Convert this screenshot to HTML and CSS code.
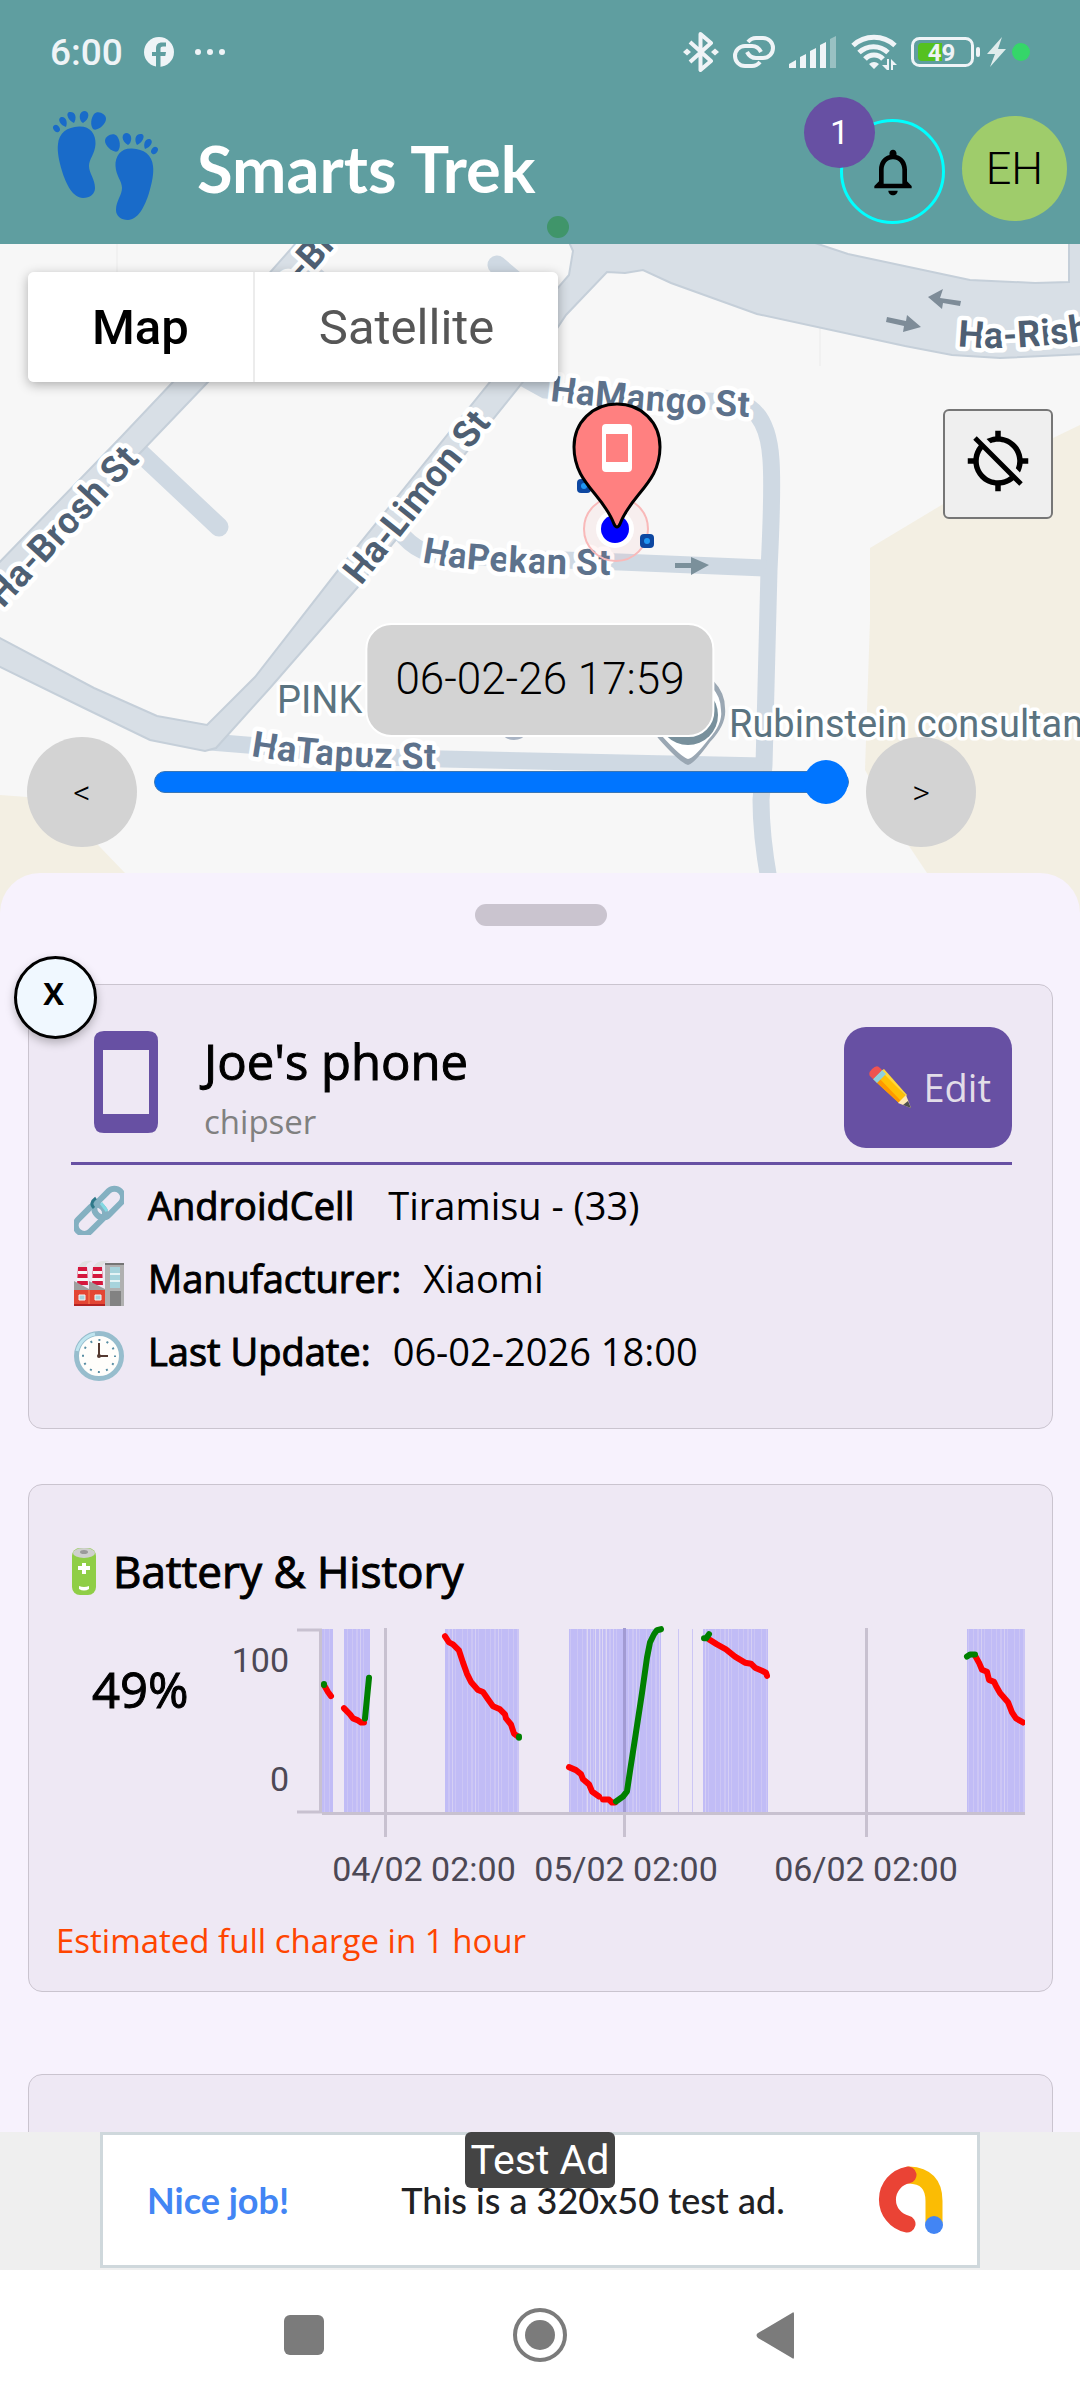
FILE: index.html
```html
<!DOCTYPE html>
<html lang="en">
<head>
    <meta charset="UTF-8">
    <meta name="viewport" content="width=device-width, initial-scale=1.0">
    <title>Smarts Trek</title>
    <link rel="stylesheet" href="styles.css">
</head>
<body>
    <header class="top">
        <div class="status-bar">
            <span class="clock">6:00</span>
            <svg class="fb" width="30" height="30" viewBox="0 0 30 30" aria-hidden="true">
                <circle cx="15" cy="15" r="15" fill="#eff4f7"/>
                <path d="M12 30V19H8v-4h4v-3.500c0-4 2.300-6 6-6h4v4h-3c-1.700 0-2.500.8-2.500 2.300V15H22l-.7 4h-4.800v11z" fill="#5f9ea0"/>
            </svg>
            <svg width="32" height="8" viewBox="0 0 32 8" aria-hidden="true">
                <g fill="#eff4f7"><circle cx="4" cy="4" r="3"/><circle cx="16" cy="4" r="3"/><circle cx="28" cy="4" r="3"/></g>
            </svg>
            <div class="status-icons">
                <svg width="36" height="40" viewBox="0 0 36 40" aria-hidden="true">
                    <path d="M7 10l21 19-10.500 9V2L28 11 7 30" fill="none" stroke="#eff4f7" stroke-width="4" stroke-linejoin="round"/>
                    <path d="M0 20l4-3.500L8 20l-4 3.500zM28 20l4-3.500 4 3.500-4 3.500z" fill="#eff4f7"/>
                </svg>
                <svg class="s-link" width="42" height="32" viewBox="0 0 42 32" aria-hidden="true">
                    <g fill="none" stroke="#eff4f7" stroke-width="4">
                        <path d="M15 6c2-2.500 5-4 8-4h7a9.500 9.500 0 0 1 0 20h-7c-4 0-7-2-9-6"/>
                        <path d="M27 26c-2 2.500-5 4-8 4h-7a9.500 9.500 0 0 1 0-20h7c4 0 7 2 9 6"/>
                    </g>
                </svg>
                <svg class="s-signal" width="48" height="32" viewBox="0 0 48 32" aria-hidden="true">
                    <g fill="#eff4f7"><path d="M0 32v-4l7-4v8zM11 32V21l6-3v14zM21 32V15l6-3v20zM31 32V9l6-3v26z"/><path opacity=".4" d="M41 32V3l6-3v32z"/></g>
                </svg>
                <svg class="s-wifi" width="46" height="36" viewBox="0 0 46 36" aria-hidden="true">
                    <g fill="none" stroke="#eff4f7" stroke-width="5"><path d="M2 11.500a31 31 0 0 1 42 0"/><path d="M8 18.500a21 21 0 0 1 29 0"/><path d="M14 25a12 12 0 0 1 18 0"/></g>
                    <path d="M18 30q5-4 10 0l-5 5zM31 31h5v5zM36 25h2v11h-2zM40 25l6 6h-4v5h-2z" fill="#eff4f7"/>
                </svg>
                <svg class="s-battery" width="70" height="30" viewBox="0 0 70 30" aria-hidden="true">
                    <rect x="1.500" y="1.500" width="60" height="27" rx="7" fill="none" stroke="#eff4f7" stroke-width="3"/>
                    <path d="M7 10q0-4 4-4h20v18H11q-4 0-4-4z" fill="#55c120"/>
                    <rect x="65" y="10" width="4" height="10" rx="2" fill="#eff4f7"/>
                    <text x="30.500" y="24" text-anchor="middle" class="battery-text">49</text>
                </svg>
                <svg class="s-bolt" width="19" height="30" viewBox="0 0 19 30" aria-hidden="true"><path d="M15 0L0 17h8L3 30l16-18h-8z" fill="#dfecec"/></svg>
                <span class="live-dot"></span>
            </div>
        </div>
        <div class="app-bar">
            <svg class="feet" viewBox="52 107 107 116" aria-hidden="true">
                <defs>
                    <g id="foot">
                        <path d="M79 125.500C90 125 96 133 95.500 143C95 153 89 158 89 165C89 172 95 178 95 187C95 193 90 197 83 197C73 197 66 183 62 170C59 160 57 150 58 143C59 132 67 126 79 125.500Z"/>
                        <path d="M93 128C90 124 91 117 94 113C98 109 106 113 106 118C106 123 97 131 93 128Z"/>
                        <path d="M83 122C79 120 78 111 84 110C90 110 90 118 83 122ZM74 122C69 120 65 113 69 111C76 110 77 117 74 122ZM66 126C60 124 57 118 61 116C66 115 68 121 66 126Z"/>
                        <ellipse cx="56.500" cy="127.500" rx="3" ry="4" transform="rotate(-35 56.500 127.500)"/>
                    </g>
                </defs>
                <g fill="#196bc9"><use href="#foot"/><use href="#foot" transform="translate(211 22) scale(-1 1)"/></g>
            </svg>
            <h1 class="brand">Smarts Trek</h1>
            <button class="bell" type="button" aria-label="Notifications">
                <svg width="56" height="56" viewBox="0 0 24 24" aria-hidden="true"><path d="M12 22c1.100 0 2-.9 2-2h-4c0 1.100.9 2 2 2zm6-6v-5c0-3.070-1.630-5.640-4.500-6.320V4c0-.83-.67-1.500-1.500-1.500s-1.500.67-1.500 1.500v.68C7.640 5.360 6 7.920 6 11v5l-2 2v1h16v-1l-2-2zm-2 1H8v-6c0-2.480 1.510-4.500 4-4.500s4 2.020 4 4.500v6z"/></svg>
                <span class="badge">1</span>
            </button>
            <button class="avatar" type="button">EH</button>
        </div>
        <span class="green-dot"></span>
    </header>

    <section class="map">
        <svg class="map-canvas" viewBox="0 244 1080 669" preserveAspectRatio="xMidYMin slice" aria-label="Street map">
            <rect x="0" y="244" width="1080" height="700" fill="#f7f7f7"/>
            <path d="M117 244v30M820 244v122" stroke="#ebebeb"/>
            <path d="M1080 425L1053 438L870 548L870 620L865 770L905 840L927 873L960 913H1080ZM0 795L27 797L60 805L100 847L125 873L150 913H0Z" fill="#f3efe3"/>
            <!-- small streets -->
            <g fill="none" stroke="#cfd9e3" stroke-width="17">
                <path d="M134 447L219 527M497 265L550 310M306 268L330 290" stroke-linecap="round" stroke-width="19"/>
                <path d="M520 376L545 390Q640 397 740 403Q768 412 771 460Q773 490 769 570L764 765L761 800Q761 835 769 880"/>
                <path d="M400 532Q418 556 450 556L620 562L766 568M210 742L260 746Q350 757 443 759L764 766"/>
            </g>
            <!-- main streets -->
            <g fill="#d8dfe6" stroke="#c5cfd9" stroke-width="2">
                <path d="M297 242L173 382L121 437L-10 572V608L143 450L208 382L331 242Z"/>
                <path d="M569 242L573 251L569 275L556 290L490 382L336 573L255 677L207 725L157 716L94 688L-4 636V665L84 708L150 740L205 751L216 748L270 688L357 588L523 382L556 330L566 315L607 272L625 273L643 270L671 283L757 314L905 346L952 355L1000 358L1084 354V240H1069V282L1035 283L970 280L848 254L812 242Z"/>
            </g>
            <g fill="#7e8c98">
                <path d="M887 317l19 4 1-6 14 12-18 5 1-6-18-4zM961 301l-21-3 3-9-15 8 14 12 1-6 17 3z"/>
                <path d="M675 563h16v-6l18 8-18 10v-7h-16z" fill="#7b909b"/>
            </g>
            <defs>
                <path id="risk" d="M958 346Q1010 352 1090 340"/>
                <path id="limon" d="M361 586L515 394"/>
                <path id="brosh" d="M3 609L170 428"/>
                <path id="broshTop" d="M290 297L370 208"/>
                <path id="mango" d="M550 401Q640 412 770 418"/>
                <path id="pekan" d="M422 562Q480 575 640 575"/>
                <path id="tapuz" d="M251 756Q320 769 470 769"/>
            </defs>
            <g class="street">
                <text><textPath href="#risk">Ha-Rish</textPath></text>
                <text><textPath href="#limon">Ha-Limon St</textPath></text>
                <text><textPath href="#brosh">Ha-Brosh St</textPath></text>
                <text><textPath href="#broshTop">a-Br</textPath></text>
            </g>
            <g class="street minor">
                <text><textPath href="#mango">HaMango St</textPath></text>
                <text><textPath href="#pekan">HaPekan St</textPath></text>
                <text><textPath href="#tapuz">HaTapuz St</textPath></text>
            </g>
            <path d="M688 765Q680 763 658 738Q649 724 651 708A37 37 0 0 1 725 708Q727 724 710 742Q694 764 688 765Z" fill="#9aa7b3"/>
            <path d="M688 759Q681 757 662 736Q653 724 655 710A33 33 0 0 1 721 710Q723 724 708 740Q694 758 688 759Z" fill="#fff"/>
            <circle cx="688" cy="715" r="30" fill="#78909c"/>
            <ellipse cx="514" cy="735" rx="10" ry="5" fill="#a9b4c4"/>
            <text class="poi" x="277" y="713">PINK</text>
            <text class="poi" x="729" y="737">Rubinstein consultants</text>
            <!-- track points and position marker -->
            <circle cx="616" cy="529" r="32" fill="#ff8080" fill-opacity=".07" stroke="#f9b9b9" stroke-width="2"/>
            <g fill="#0d47a1"><rect x="577" y="479" width="14" height="14" rx="4"/><rect x="640" y="534" width="14" height="14" rx="4"/><rect x="613" y="505" width="14" height="14" rx="4"/></g>
            <g fill="#2196f3"><circle cx="584" cy="486" r="3"/><circle cx="647" cy="541" r="3"/></g>
            <circle cx="615" cy="529" r="19" fill="#fff"/>
            <circle cx="615" cy="529" r="14" fill="#00f"/>
            <path d="M617 404C641 404 660 422 660 447C660 483 631 494 620 524Q617 530 614 524C603 494 574 483 574 447C574 422 593 404 617 404Z" fill="#ff8080" stroke="#000" stroke-width="3"/>
            <path fill-rule="evenodd" d="M606 424h22q4 0 4 4v40q0 4-4 4h-22q-4 0-4-4v-40q0-4 4-4zM606 434v28h22v-28z" fill="#fff"/>
        </svg>

        <div class="map-type">
            <button class="type-btn active" type="button">Map</button>
            <button class="type-btn" type="button">Satellite</button>
        </div>
        <button class="locate" type="button" aria-label="Locate">
            <svg width="66" height="66" viewBox="0 0 24 24" aria-hidden="true"><path d="M20.940 11c-.46-4.170-3.770-7.480-7.940-7.940V1h-2v2.060c-1.130.12-2.190.46-3.160.97l1.500 1.500C10.160 5.190 11.060 5 12 5c3.870 0 7 3.130 7 7 0 .94-.19 1.840-.52 2.650l1.500 1.500c.5-.96.84-2.020.97-3.150H23v-2h-2.060zM3 4.270l2.040 2.040C3.970 7.620 3.250 9.230 3.060 11H1v2h2.060c.46 4.170 3.770 7.480 7.940 7.940V23h2v-2.060c1.770-.2 3.380-.91 4.690-1.980L19.730 21 21 19.730 4.270 3 3 4.270zm13.270 13.270C15.090 18.450 13.610 19 12 19c-3.870 0-7-3.130-7-7 0-1.610.55-3.090 1.460-4.270l9.810 9.810z"/></svg>
        </button>
        <output class="time-label" for="timeline">06-02-26 17:59</output>
        <div class="timeline">
            <button class="step" type="button" aria-label="Previous">&lt;</button>
            <input class="slider" id="timeline" type="range" min="0" max="100" value="100" aria-label="Time">
            <button class="step" type="button" aria-label="Next">&gt;</button>
        </div>
    </section>

    <main class="sheet">
        <div class="handle"></div>
        <button class="close" type="button" aria-label="Close">X</button>

        <section class="card device">
            <div class="device-head">
                <svg class="phone" width="64" height="102" viewBox="0 0 64 102" aria-hidden="true"><path fill-rule="evenodd" d="M10 0h44q10 0 10 10v82q0 10-10 10H10Q0 102 0 92V10Q0 0 10 0zM9 19v64h46V19z" fill="#6750a3"/></svg>
                <div class="device-name">
                    <h2 class="big">Joe's phone</h2>
                    <p class="owner">chipser</p>
                </div>
                <button class="edit" type="button">
                    <svg width="42" height="42" viewBox="0 0 42 42" aria-hidden="true">
                        <path d="M13 4L37 30l-7 7L4 13z" fill="#ffc107"/>
                        <path d="M7 16l23 21 2-2L9 11z" fill="#ff9800"/>
                        <path d="M12 5l25 25 1-1-23-26z" fill="#ffd83b"/>
                        <path d="M37 29l-8 8 13 5z" fill="#ffe9b5"/>
                        <path d="M39 35l-5 4 8 3z" fill="#4e4e4e"/>
                        <path d="M13 4l4 4-9 9-4-4z" fill="#8fd0dd"/>
                        <path d="M2 11Q-2 8 3 3T11 2l2 2-9 9z" fill="#ef5350"/>
                    </svg>
                    Edit
                </button>
            </div>
            <ul class="facts">
                <li>
                    <svg width="50" height="50" viewBox="0 0 50 50" aria-hidden="true">
                        <g fill="none" stroke-width="6" stroke="#84b0c1">
                            <rect x="18" y="10" width="33" height="17" rx="8" transform="rotate(-45 34 18)"/>
                            <rect x="-1" y="26" width="34" height="17" rx="8" transform="rotate(-45 16 34)"/>
                            <path d="M20 23q-5-5 2-10" stroke="#2f7889" stroke-width="3"/>
                            <path d="M27 18l6 8" stroke="#82d9e3" stroke-width="3"/>
                        </g>
                    </svg>
                    <b>AndroidCell</b><span class="android">Tiramisu - (33)</span>
                </li>
                <li>
                    <svg width="50" height="50" viewBox="0 0 50 50" aria-hidden="true">
                        <path d="M4 10Q7 1 19 3Q11 5 12 10zM19 10Q22 1 36 3Q28 5 28 10z" fill="#e0e0e0"/>
                        <path d="M31 5h19v43H31z" fill="#b0b0b0"/><path d="M31 5h19v2H31z" fill="#757575"/>
                        <path d="M36 9h10v21H36z" fill="#a7d3dc"/><path d="M36 15h10v2H36zM36 22h10v2H36z" fill="#e5f3f5"/><path d="M36 33h11v15H36z" fill="#828282"/>
                        <path d="M4 9h9l1 18H3zM19 9h9l1 18H18z" fill="#d5173d"/>
                        <path d="M4 13h9v3H4zM3 20h11v3H3zM19 13h9v3h-9zM18 20h11v3H18z" fill="#f5f5f5"/>
                        <path d="M0 23l15 8v-8l16 8v3H0z" fill="#9e9e9e"/>
                        <path d="M0 32h31v16H0z" fill="#e34634"/><path d="M15 32v16" stroke="#f68a55"/><path d="M0 46h31v2H0z" fill="#b32222"/>
                        <path d="M5 37h6v5H5zM21 37h6v5h-6z" fill="#a7d3dc" stroke="#f5f5f5"/>
                    </svg>
                    <b>Manufacturer:</b><span>Xiaomi</span>
                </li>
                <li>
                    <svg width="50" height="50" viewBox="0 0 50 50" aria-hidden="true">
                        <circle cx="25" cy="25" r="22.500" fill="#fffefb" stroke="#97bdcd" stroke-width="5"/>
                        <path d="M3 20A22.500 22.500 0 0 1 21 3" fill="none" stroke="#bfe5ef" stroke-width="3"/>
                        <circle cx="25" cy="25" r="16" fill="none" stroke="#578da3" stroke-width="2" stroke-dasharray="2 6.370" stroke-dashoffset="1"/>
                        <path d="M25 12v13h9" fill="none" stroke="#543930" stroke-width="2"/><circle cx="25" cy="25" r="2" fill="#543930"/>
                    </svg>
                    <b>Last Update:</b><span>06-02-2026 18:00</span>
                </li>
            </ul>
        </section>

        <section class="card battery">
            <h2 class="battery-title">
                <svg width="26" height="48" viewBox="0 0 26 48" aria-hidden="true">
                    <rect x="1" y="1" width="24" height="47" rx="8" fill="#8fce46"/>
                    <ellipse cx="13" cy="6" rx="11" ry="5" fill="#cfd0ce"/><ellipse cx="13" cy="5" rx="4" ry="2" fill="#9a9a9a"/>
                    <path d="M11 16h4v3h4v4h-4v4h-4v-4H7v-4h4zM8 39q5 2 10 0v3q-5 3-10 0z" fill="#fff"/>
                </svg>
                Battery &amp; History
            </h2>
            <div class="battery-body">
                <div class="big percent">49%</div>
                <svg class="chart" viewBox="230 1614 795 284" role="img" aria-label="Battery history">
                    <defs>
                        <pattern id="stripes" width="23" height="10" patternUnits="userSpaceOnUse">
                            <path fill="#c1bcf6" d="M0 0h23v10H0z"/>
                            <path fill="#ccc6f5" d="M2 0h1v10H2zM7 0h1v10H7zM11 0h2v10h-2zM18 0h1v10h-1z"/>
                            <path fill="#d5cff4" d="M15 0h1v10h-1z"/>
                        </pattern>
                    </defs>
                    <path fill="url(#stripes)" d="M322 1629h11v183h-11zM344 1629h26v183h-26zM445 1629h74v183h-74zM569 1629h92v183h-92zM678 1629h1v183h-1zM692 1629h1v183h-1zM703 1629h65v183h-65zM967 1629h58v183h-58z"/>
                    <path fill="#ddd7f3" d="M587 1629h1v183h-1zM595 1629h1v183h-1zM599 1629h1v183h-1zM602 1629h1v183h-1zM606 1629h1v183h-1z"/>
                    <g fill="none" stroke="#c8c1d0" stroke-width="3">
                        <path d="M297 1630h23.500v182H297M322 1813.500h703"/>
                        <path d="M385.500 1628v209M866.500 1628v209M624.500 1813v24"/>
                        <path d="M624.500 1628v184" stroke="#a29bd3"/>
                    </g>
                    <g class="axis">
                        <text x="289" y="1672" text-anchor="end">100</text>
                        <text x="289" y="1791" text-anchor="end">0</text>
                        <text x="424" y="1881" text-anchor="middle">04/02 02:00</text>
                        <text x="626" y="1881" text-anchor="middle">05/02 02:00</text>
                        <text x="866" y="1881" text-anchor="middle">06/02 02:00</text>
                    </g>
                    <g class="trend" transform="translate(0 -20.600) scale(1 1.014)">
                        <path class="down" d="M324 1682L328 1689L331 1693M344 1705L350 1711L353 1715L358 1717L361 1719L364 1719M445 1634L449 1640L453 1642L459 1648L463 1660L467 1671L471 1679L478 1687L483 1689L488 1696L493 1703L500 1706L505 1711L506 1715L511 1721L514 1730L518 1733"/>
                        <path class="down" d="M569 1763L576 1766L581 1770L583 1775L589 1780L592 1787L599 1792M603 1795L609 1795L612 1798L615 1798M709 1637L717 1642L726 1647L735 1654L745 1660L751 1661L755 1665L762 1668L766 1670L767 1673"/>
                        <path class="down" d="M975 1653L979 1660L982 1667L987 1669L989 1677L994 1679L996 1683L1000 1690L1008 1699L1012 1709L1016 1715L1023 1719"/>
                        <path class="up" d="M324 1681v1M365 1715L369 1675M519 1733v1M616 1797L623 1792L627 1787L630 1767L635 1735L642 1690L647 1655L650 1640L654 1632L657 1628L661 1627M704 1636L706 1636L709 1632M967 1654L970 1652L975 1652"/>
                    </g>
                </svg>
            </div>
            <p class="estimate">Estimated full charge in 1 hour</p>
        </section>

        <section class="card next"></section>
    </main>

    <aside class="ad">
        <a class="ad-box" href="#">
            <span class="nice">Nice job!</span>
            <span class="ad-text">This is a 320x50 test ad.</span>
            <svg class="ad-logo" width="68" height="68" viewBox="0 0 68 68" aria-hidden="true">
                <g fill="none" stroke-width="17" stroke-linecap="round">
                    <path d="M34 9Q59 10 59 35V56" stroke="#fbbc04"/>
                    <path d="M33 9A25 25 0 0 0 32 58" stroke="#ea4335"/>
                </g>
                <circle cx="59" cy="59" r="9" fill="#4285f4"/>
            </svg>
        </a>
        <span class="ad-tag">Test Ad</span>
    </aside>

    <nav class="nav-bar">
        <button type="button" aria-label="Recent apps"><svg width="56" height="56" viewBox="0 0 56 56" aria-hidden="true"><rect x="8" y="8" width="40" height="40" rx="6" fill="#7b7b7b"/></svg></button>
        <button type="button" aria-label="Home"><svg width="56" height="56" viewBox="0 0 56 56" aria-hidden="true"><circle cx="28" cy="28" r="25" fill="none" stroke="#7b7b7b" stroke-width="4"/><circle cx="28" cy="28" r="15" fill="#7b7b7b"/></svg></button>
        <button type="button" aria-label="Back"><svg width="56" height="56" viewBox="0 0 56 56" aria-hidden="true"><path d="M44 6q2-2 2 1v43q0 3-2 1L10 31q-3-3 0-5z" fill="#7b7b7b"/></svg></button>
    </nav>
</body>
</html>
```
FILE: styles.css
```css
*{
    box-sizing: border-box;
}
body{
    margin: 0;
    height: 100vh;
    display: flex;
    flex-direction: column;
    background-color: #ffffff;
    color: #000000;
    font-family: "Open Sans", sans-serif;
    overflow: hidden;
}
h1, h2, p, ul{
    margin: 0;
    padding: 0;
    font-weight: 400;
}
button{
    font-family: inherit;
    color: inherit;
    border: none;
    padding: 0;
    cursor: pointer;
}
svg{
    display: block;
    flex: none;
}

/* header */
.top{
    position: relative;
    background-color: #5f9ea0;
    font-family: Roboto, sans-serif;
}
.status-bar{
    display: flex;
    align-items: center;
    height: 104px;
    padding: 0 50px;
}
.clock{
    font-size: 37px;
    font-weight: 500;
    color: #eff4f7;
}
.fb{
    margin: 0 20px 0 21px;
}
.status-icons{
    display: flex;
    align-items: center;
    margin-left: auto;
}
.s-link, .s-signal, .s-wifi, .s-battery{
    margin-left: 14px;
}
.s-bolt, .live-dot{
    margin-left: 6px;
}
.battery-text{
    font-size: 24px;
    font-weight: 700;
    fill: #eff4f7;
}
.live-dot{
    width: 18px;
    height: 18px;
    border-radius: 50%;
    background-color: #35d669;
}
.app-bar{
    display: flex;
    align-items: center;
    height: 140px;
    padding: 0 13px 12px 52px;
}
.feet{
    width: 107px;
    height: 116px;
    margin-bottom: 5px;
}
.brand{
    margin-left: 38px;
    font-family: Lato, sans-serif;
    font-size: 65px;
    font-weight: 700;
    color: #ffffff;
}
.bell{
    position: relative;
    display: flex;
    align-items: center;
    justify-content: center;
    width: 105px;
    height: 105px;
    margin: 7px 17px 0 auto;
    border: 3px solid #00ffff;
    border-radius: 50%;
    background: none;
}
.badge{
    position: absolute;
    left: -39px;
    top: -25px;
    width: 71px;
    height: 71px;
    border-radius: 50%;
    background-color: #6750a3;
    color: #ffffff;
    font-size: 34px;
    line-height: 71px;
}
.avatar{
    width: 105px;
    height: 105px;
    border-radius: 50%;
    background-color: #9fcc6b;
    font-size: 45px;
    font-weight: 300;
}
.green-dot{
    position: absolute;
    left: 547px;
    bottom: 6px;
    width: 22px;
    height: 22px;
    border-radius: 50%;
    background-color: #40956a;
}

/* map */
.map{
    position: relative;
    flex: none;
    height: 669px;
    font-family: Roboto, sans-serif;
}
.map-canvas{
    width: 100%;
    height: 100%;
}
.street{
    font-size: 37px;
    font-weight: 700;
    fill: #4e5f73;
    stroke: #ffffff;
    stroke-width: 9px;
    stroke-linejoin: round;
    paint-order: stroke;
}
.minor{
    font-size: 36px;
    fill: #5d728c;
}
.poi{
    font-size: 38px;
    fill: #5a7380;
    stroke: #ffffff;
    stroke-width: 7px;
    stroke-linejoin: round;
    paint-order: stroke;
}
.map-type{
    position: absolute;
    left: 28px;
    top: 28px;
    display: flex;
    height: 110px;
    border-radius: 6px;
    box-shadow: 0 3px 12px rgba(0, 0, 0, 0.3);
}
.type-btn{
    padding: 0 64px;
    background-color: #ffffff;
    color: #565656;
    font-size: 49px;
    border-radius: 0 6px 6px 0;
}
.active{
    color: #000000;
    font-weight: 500;
    border-right: 2px solid #ececec;
    border-radius: 6px 0 0 6px;
}
.locate{
    position: absolute;
    right: 27px;
    top: 165px;
    display: flex;
    align-items: center;
    justify-content: center;
    width: 110px;
    height: 110px;
    padding-bottom: 6px;
    border: 2px solid #767676;
    border-radius: 6px;
    background-color: #efefef;
}
.time-label{
    position: absolute;
    left: 50%;
    top: 379px;
    transform: translateX(-50%);
    padding: 0 28px 2px;
    border: 2px solid #ffffff;
    border-radius: 26px;
    background-color: #d3d3d3;
    font-size: 44px;
    font-weight: 300;
    line-height: 108px;
    white-space: nowrap;
}
.timeline{
    position: absolute;
    left: 27px;
    right: 104px;
    top: 493px;
    display: flex;
    align-items: center;
    gap: 17px;
}
.step{
    flex: none;
    width: 110px;
    height: 110px;
    border-radius: 50%;
    background-color: #d3d3d3;
    font-family: Roboto, sans-serif;
    font-size: 34px;
    font-weight: 300;
}
.slider{
    appearance: none;
    flex: 1;
    min-width: 0;
    height: 44px;
    margin: 0 0 20px;
    background: none;
}
.slider::-webkit-slider-runnable-track{
    height: 22px;
    border: 1px solid #3a76b5;
    border-radius: 11px;
    background-color: #0075ff;
}
.slider::-webkit-slider-thumb{
    appearance: none;
    width: 44px;
    height: 44px;
    margin-top: -12px;
    border-radius: 50%;
    background-color: #0075ff;
}

/* bottom sheet */
.sheet{
    position: relative;
    flex: 1;
    min-height: 0;
    overflow: hidden;
    margin-top: -40px;
    padding: 31px 27px 0 28px;
    border-radius: 40px 40px 0 0;
    background-color: #f7f2fd;
}
.handle{
    width: 132px;
    height: 22px;
    margin: 0 auto 58px;
    border-radius: 11px;
    background-color: #cac4cf;
}
.close{
    position: absolute;
    left: 14px;
    top: 83px;
    width: 83px;
    height: 83px;
    padding: 0 4px 10px 0;
    border: 3px solid #000000;
    border-radius: 50%;
    background-color: #f0f8ff;
    box-shadow: 0 4px 10px rgba(0, 0, 0, 0.25);
    font-size: 31px;
    font-weight: 700;
}
.card{
    border: 1px solid #cac4cf;
    border-radius: 14px;
    background-color: #eee8f4;
}
.big{
    font-size: 49px;
    line-height: 68px;
    -webkit-text-stroke: 1px #000000;
}
.device{
    padding: 42px 40px 40px 42px;
}
.device-head{
    display: flex;
    align-items: flex-start;
    padding-bottom: 13px;
    border-bottom: 3px solid #6750a3;
}
.phone{
    margin: 4px 46px 0 23px;
}
.owner{
    color: #808080;
    font-size: 33px;
    line-height: 54px;
}
.edit{
    display: flex;
    align-items: center;
    gap: 12px;
    height: 121px;
    margin-left: auto;
    padding: 0 21px 2px 25px;
    border-radius: 22px;
    background-color: #6750a3;
    color: #e2dde8;
    font-size: 38px;
}
.facts{
    padding-top: 4px;
    list-style: none;
    font-size: 38px;
    line-height: 73px;
}
.facts li{
    display: flex;
    align-items: center;
}
.facts svg{
    margin: 9px 24px 0 3px;
}
.facts b{
    font-weight: 400;
    -webkit-text-stroke: 1px #000000;
    margin-right: 22px;
}
.android{
    margin-left: 12px;
}
.battery{
    margin-top: 55px;
    padding: 56px 27px 27px 27px;
}
.battery-title{
    display: flex;
    align-items: center;
    gap: 16px;
    margin-left: 15px;
    font-size: 44px;
    line-height: 60px;
    -webkit-text-stroke: 1px #000000;
}
.battery-body{
    display: flex;
    align-items: flex-start;
    margin-top: 13px;
}
.percent{
    flex: none;
    width: 174px;
    padding: 41px 0 0 36px;
}
.chart{
    flex: 1;
    min-width: 0;
}
.axis{
    font-family: Roboto, sans-serif;
    font-size: 34px;
    fill: #4c4855;
}
.trend{
    fill: none;
    stroke-width: 6px;
    stroke-linecap: round;
    stroke-linejoin: round;
}
.down{
    stroke: #ff0000;
}
.up{
    stroke: #008000;
}
.estimate{
    margin-top: 20px;
    color: #ff4500;
    font-size: 33px;
    line-height: 46px;
}
.next{
    height: 400px;
    margin-top: 82px;
}

/* ad banner */
.ad{
    position: relative;
    flex: none;
    display: flex;
    justify-content: center;
    height: 138px;
    padding: 0 100px 2px;
    background-color: #efefef;
}
.ad-box{
    flex: 1;
    display: flex;
    align-items: center;
    justify-content: space-between;
    padding: 0 34px 0 44px;
    border: 3px solid #cfd8dc;
    background-color: #ffffff;
    color: #202124;
    font-family: Lato, sans-serif;
    font-size: 36px;
    font-weight: 500;
    text-decoration: none;
}
.nice{
    color: #4285f4;
    font-weight: 700;
}
.ad-text{
    margin-left: 22px;
}
.ad-tag{
    position: absolute;
    top: 0;
    padding: 0 6px;
    border-radius: 6px;
    background-color: #444444;
    color: #ffffff;
    font-family: Roboto, sans-serif;
    font-size: 41px;
    line-height: 56px;
}

/* android navigation */
.nav-bar{
    flex: none;
    display: flex;
    align-items: center;
    justify-content: center;
    gap: 180px;
    height: 130px;
    background-color: #ffffff;
}
.nav-bar button{
    background: none;
}
```
